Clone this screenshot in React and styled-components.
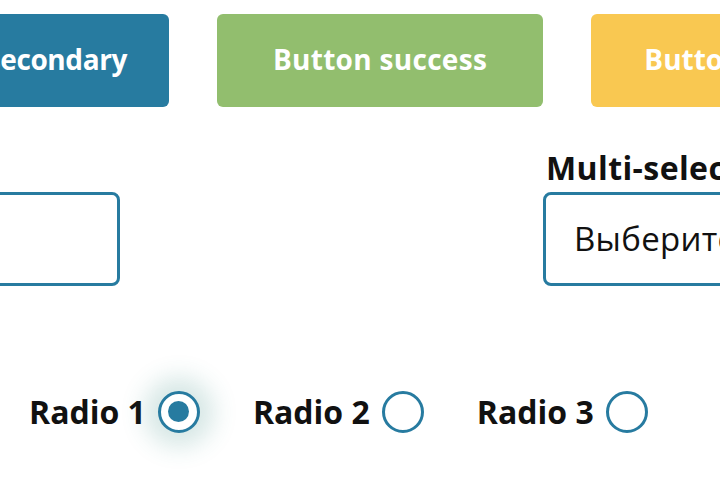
import React from 'react';
import styled, { createGlobalStyle } from 'styled-components';

const COLOURS = {
  BLUE: '#277ba0',
  GREEN: '#92be6e',
  YELLOW: '#f9c851',
  TEXT: '#111111',
};

const FONT = "'Open Sans', 'Noto Sans', sans-serif";

const GlobalStyle = createGlobalStyle`
  html, body {
    margin: 0;
    padding: 0;
    background: #ffffff;
    overflow: hidden;
  }
  body {
    font-family: ${FONT};
    color: ${COLOURS.TEXT};
  }
`;

const Page = styled.div`
  width: 720px;
  height: 480px;
  overflow: hidden;
`;

const Canvas = styled.div`
  margin-left: -157px;
  width: 1100px;
  display: flex;
  flex-direction: column;
`;

const ButtonRow = styled.div`
  display: flex;
  gap: 48px;
  margin-top: 14px;
`;

const Button = styled.button`
  width: 326px;
  height: 93px;
  border: 0;
  border-radius: 6px;
  background: ${(props) => props.bg};
  color: #ffffff;
  font-family: ${FONT};
  font-weight: 700;
  font-size: 28px;
  letter-spacing: ${(props) => props.tracking || '0'};
  display: flex;
  align-items: center;
  justify-content: center;
  padding: 0 0 4px;
`;

const FieldRow = styled.div`
  display: flex;
  gap: 423px;
  margin-left: -49px;
  margin-top: 43px;
`;

const Field = styled.div`
  display: flex;
  flex-direction: column;
  gap: 6px;
  width: 326px;
`;

const Label = styled.label`
  font-family: ${FONT};
  font-weight: 700;
  font-size: 32px;
  line-height: 36px;
  letter-spacing: 0.4px;
  padding-left: 3px;
  white-space: nowrap;
`;

const Input = styled.div`
  box-sizing: border-box;
  height: 94px;
  border: 3px solid ${COLOURS.BLUE};
  border-radius: 8px;
  padding: 0 28px 2px;
  display: flex;
  align-items: center;
  font-family: ${FONT};
  font-size: 33px;
  letter-spacing: 0.3px;
  color: #111;
  white-space: nowrap;
  overflow: hidden;
`;

const RadioRow = styled.div`
  display: flex;
  align-items: center;
  gap: 53px;
  margin-left: 186px;
  margin-top: 104px;
`;

const RadioItem = styled.label`
  display: flex;
  align-items: center;
  gap: 12px;
  font-family: ${FONT};
  font-weight: 700;
  font-size: 32px;
`;

const RadioCircle = styled.span`
  box-sizing: border-box;
  width: 42px;
  height: 42px;
  border-radius: 50%;
  border: 3px solid ${COLOURS.BLUE};
  display: flex;
  align-items: center;
  justify-content: center;
  background: #fff;
  box-shadow: ${(props) =>
    props.checked ? '0 0 24px 14px rgba(50, 135, 125, 0.2)' : 'none'};

  &::after {
    content: '';
    width: 21px;
    height: 21px;
    border-radius: 50%;
    background: ${COLOURS.BLUE};
    display: ${(props) => (props.checked ? 'block' : 'none')};
  }
`;

const App = () => (
  <Page>
    <GlobalStyle />
    <Canvas>
      <ButtonRow>
        <Button bg={COLOURS.BLUE} tracking="-0.4px">
          Button secondary
        </Button>
        <Button bg={COLOURS.GREEN} tracking="0.3px">
          Button success
        </Button>
        <Button bg={COLOURS.YELLOW}>Button warning</Button>
      </ButtonRow>
      <FieldRow>
        <Field>
          <Label>Input</Label>
          <Input />
        </Field>
        <Field>
          <Label>Multi-select</Label>
          <Input>Выберите значение</Input>
        </Field>
      </FieldRow>
      <RadioRow>
        <RadioItem>
          Radio 1 <RadioCircle checked />
        </RadioItem>
        <RadioItem>
          Radio 2 <RadioCircle />
        </RadioItem>
        <RadioItem>
          Radio 3 <RadioCircle />
        </RadioItem>
      </RadioRow>
    </Canvas>
  </Page>
);

export default App;
